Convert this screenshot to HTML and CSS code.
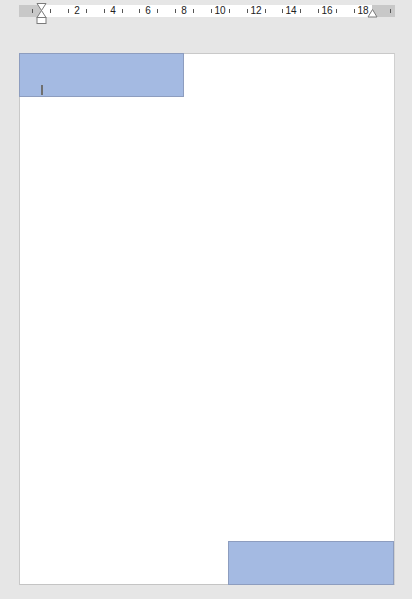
FILE: index.html
```html
<!DOCTYPE html>
<html lang="en">
<head>
    <meta charset="UTF-8">
    <meta name="viewport" content="width=device-width, initial-scale=1.0">
    <title>Document</title>
    <link rel="stylesheet" href="styles.css">
</head>
<body>
    <div class="ruler">
        <div class="ruler-margin left"></div>
        <div class="ruler-text"></div>
        <div class="ruler-margin right"></div>

        <span class="tick" style="left: 13px"></span>
        <span class="tick" style="left: 31px"></span>
        <span class="tick" style="left: 49px"></span>
        <span class="num" style="left: 58px">2</span>
        <span class="tick" style="left: 67px"></span>
        <span class="tick" style="left: 85px"></span>
        <span class="num" style="left: 94px">4</span>
        <span class="tick" style="left: 103px"></span>
        <span class="tick" style="left: 120px"></span>
        <span class="num" style="left: 129px">6</span>
        <span class="tick" style="left: 138px"></span>
        <span class="tick" style="left: 156px"></span>
        <span class="num" style="left: 165px">8</span>
        <span class="tick" style="left: 174px"></span>
        <span class="tick" style="left: 192px"></span>
        <span class="num" style="left: 201px">10</span>
        <span class="tick" style="left: 210px"></span>
        <span class="tick" style="left: 228px"></span>
        <span class="num" style="left: 237px">12</span>
        <span class="tick" style="left: 246px"></span>
        <span class="tick" style="left: 263px"></span>
        <span class="num" style="left: 272px">14</span>
        <span class="tick" style="left: 281px"></span>
        <span class="tick" style="left: 299px"></span>
        <span class="num" style="left: 308px">16</span>
        <span class="tick" style="left: 317px"></span>
        <span class="tick" style="left: 335px"></span>
        <span class="num" style="left: 344px">18</span>
        <span class="tick" style="left: 371px"></span>

        <svg class="indent-left" width="11" height="22" viewBox="0 0 11 22">
            <path d="M1 0.5 H10 L5.5 7.5 Z" fill="#fff" stroke="#7a7a7a"/>
            <path d="M5.5 7.5 L10 14.5 H1 Z" fill="#fff" stroke="#7a7a7a"/>
            <rect x="1" y="14.5" width="9" height="6" fill="#fff" stroke="#7a7a7a"/>
        </svg>
        <svg class="indent-right" width="11" height="9" viewBox="0 0 11 9">
            <path d="M5.5 0.5 L10 8 H1 Z" fill="#fff" stroke="#7a7a7a"/>
        </svg>
    </div>

    <div class="page">
        <div class="shape top">
            <span class="caret"></span>
        </div>
        <div class="shape bottom"></div>
    </div>
</body>
</html>
```

FILE: styles.css
```css
body {
    margin: 0;
    background: #e6e6e6;
    font-family: "Liberation Sans", Arial, sans-serif;
}
.ruler {
    position: relative;
    display: flex;
    margin: 5px 0 0 19px;
    width: 376px;
    height: 12px;
}
.ruler-margin {
    background: #c8c8c8;
}
.ruler-margin.left {
    width: 22px;
}
.ruler-margin.right {
    width: 23px;
}
.ruler-text {
    flex: 1;
    background: #fff;
}
.tick {
    position: absolute;
    top: 4px;
    width: 1px;
    height: 4px;
    background: #555;
}
.num {
    position: absolute;
    top: 0;
    transform: translateX(-50%);
    font-size: 10px;
    line-height: 12px;
    color: #222;
}
.indent-left {
    position: absolute;
    left: 17px;
    top: -2px;
}
.indent-right {
    position: absolute;
    left: 348px;
    top: 4px;
}
.page {
    display: flex;
    flex-direction: column;
    justify-content: space-between;
    margin: 36px 0 0 19px;
    width: 376px;
    height: 532px;
    box-sizing: border-box;
    background: #fff;
    border: 1px solid #c9c9c9;
    border-right-color: #d0d0d0;
    border-bottom-color: #c4c4c4;
}
.shape {
    position: relative;
    height: 44px;
    box-sizing: border-box;
    background: #a4bae2;
    border: 1px solid #8d9dbf;
}
.shape.top {
    align-self: flex-start;
    width: 165px;
    margin: -1px 0 0 -1px;
}
.shape.bottom {
    align-self: flex-end;
    width: 166px;
    margin: 0 0 -1px 0;
}
.caret {
    position: absolute;
    left: 21px;
    top: 31px;
    width: 2px;
    height: 10px;
    background: #6f6f6f;
}
```
